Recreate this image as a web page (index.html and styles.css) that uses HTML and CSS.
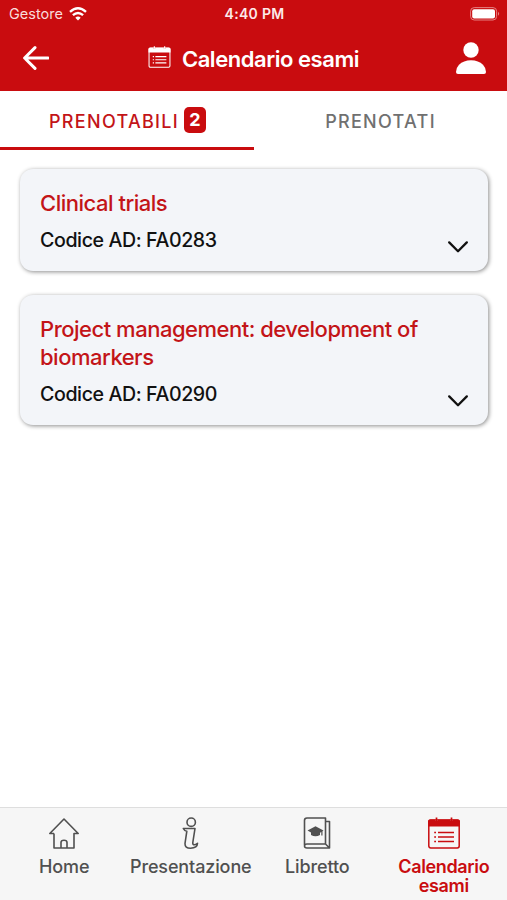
FILE: index.html
```html
<!DOCTYPE html>
<html lang="it">
<head>
<meta charset="utf-8">
<meta name="viewport" content="width=device-width, initial-scale=1">
<title>Calendario esami</title>
<link rel="stylesheet" href="styles.css">
</head>
<body>
<svg width="0" height="0" class="symbols" aria-hidden="true">
  <symbol id="calendar" viewBox="0 0 32 32">
    <path d="M8.500 .5V4M23.500 .5V4" fill="none" stroke="currentColor" stroke-width="1.700"/>
    <rect x=".8" y="3" width="30.400" height="28" rx="1.900" fill="none" stroke="currentColor" stroke-width="1.500"/>
    <path d="M0 9.500V4.500Q0 2.500 2 2.500H7.200V4H9.800V2.500H22.200V4H24.800V2.500H30Q32 2.500 32 4.500V9.500Z" fill="currentColor"/>
    <path d="M6.200 15.500H8M10 15.500H26M6.200 20H8M10 20H26M6.200 24.500H8M10 24.500H26" fill="none" stroke="currentColor" stroke-width="1.700"/>
  </symbol>
  <symbol id="chevron" viewBox="0 0 20 12">
    <path d="M1.200 1.400L10 10.200L18.800 1.400" fill="none" stroke="currentColor" stroke-width="2.300" stroke-linecap="round" stroke-linejoin="round"/>
  </symbol>
</svg>
<div class="screen">
  <header class="top">
    <div class="status">
      <div class="carrier"><span>Gestore</span>
        <svg class="wifi" viewBox="0 0 18 14"><path d="M9 13.500L6.300 10.700Q9 8.500 11.700 10.700Z" fill="#fff"/><path d="M1 4.800Q9-2.200 17 4.800M3.900 8.200Q9 3.700 14.100 8.200" fill="none" stroke="#fff" stroke-width="2.400"/></svg>
      </div>
      <time class="clock">4:40 PM</time>
      <svg class="battery" viewBox="0 0 30 14"><rect x=".6" y=".6" width="26" height="12.400" rx="3.600" fill="none" stroke="#e58082" stroke-width="1"/><rect x="2.200" y="2.200" width="22.800" height="9.200" rx="2" fill="#fff"/><path d="M28 4.800Q30.300 6.800 28 8.800Z" fill="#e58082"/></svg>
    </div>
    <div class="bar">
      <svg class="back" viewBox="0 0 26 24"><path d="M25 12H1.800M12 1.600L1.600 12L12 22.400" fill="none" stroke="#fff" stroke-width="3" stroke-linecap="round" stroke-linejoin="round"/></svg>
      <h1 class="title"><svg class="title-icon"><use href="#calendar"/></svg><span>Calendario esami</span></h1>
      <svg class="user" viewBox="0 0 30 32"><circle cx="15" cy="8" r="7.700" fill="#fff"/><path d="M0 30Q0 26 3 22.800Q7.500 18.300 15 18.300T27 22.800Q30 26 30 30Q30 32 28 32H2Q0 32 0 30Z" fill="#fff"/></svg>
    </div>
  </header>
  <nav class="tabs">
    <a class="tab active"><span>PRENOTABILI</span><b class="count">2</b></a>
    <a class="tab"><span>PRENOTATI</span></a>
  </nav>
  <main class="list">
    <article class="card">
      <h2>Clinical trials</h2>
      <div class="row"><p>Codice AD: FA0283</p><svg class="chevron"><use href="#chevron"/></svg></div>
    </article>
    <article class="card">
      <h2>Project management: development of biomarkers</h2>
      <div class="row"><p>Codice AD: FA0290</p><svg class="chevron"><use href="#chevron"/></svg></div>
    </article>
  </main>
  <nav class="bottom">
    <a class="item"><svg viewBox="0 0 32 32" class="icon"><path d="M6 16.500V31H26V16.500H30.200L16 2L1.800 16.500H6M13 31V25.500Q13 23.300 16 23.300T19 25.500V31" fill="none" stroke="currentColor" stroke-width="1.600" stroke-linejoin="round"/></svg><span>Home</span></a>
    <a class="item"><svg viewBox="0 0 32 32" class="icon"><g fill="none" stroke="currentColor" stroke-width="1.600" stroke-linejoin="round" stroke-linecap="round"><circle cx="16.200" cy="5.200" r="4.200"/><path d="M8.300 11.500H20L17.800 25.500Q17.600 27.800 19.300 27.800Q20.600 27.600 22.500 26.300Q22.300 31.200 15.500 31.200Q9.800 31.200 10 26.500L11.800 14.300Q9.500 14 8.300 11.500Z"/></g></svg><span>Presentazione</span></a>
    <a class="item"><svg viewBox="0 0 32 32" class="icon"><g fill="none" stroke="currentColor" stroke-width="1.600" stroke-linejoin="round"><path d="M3.500 28V3.500Q3.500 1 6 1H24.500V27H6Q3.500 27 3.500 29T6 31H28.500V4.500H25M28 30.500L24.500 27"/></g><path d="M6.500 13.500L14.500 9.200L22.500 13.500L21.500 14.300V18.500H20.300V15L19 15.700V18Q14.500 20.500 10 18V15.600Z" fill="currentColor"/></svg><span>Libretto</span></a>
    <a class="item current"><svg class="icon"><use href="#calendar"/></svg><span>Calendario<br>esami</span></a>
  </nav>
</div>
</body>
</html>
```
FILE: styles.css
```css
* { box-sizing: border-box; }
body { margin: 0; background: #fff; color: #111; font-family: Inter, "Liberation Sans", sans-serif; }
h1, h2, p { margin: 0; }
svg { display: block; flex: none; }
.symbols { display: none; }
.screen { display: flex; flex-direction: column; width: 507px; height: 900px; overflow: hidden; }
.top { height: 91px; background: #c90c0f; color: #fff; }
.status { display: grid; grid-template-columns: 1fr auto 1fr; align-items: center; height: 27px; padding: 0 7px 0 9px; font-size: 14.5px; }
.carrier { display: flex; align-items: center; gap: 6px; color: #f9dcdc; }
.wifi { width: 18px; height: 14px; }
.clock { font-weight: 600; font-size: 14px; letter-spacing: 0.3px; color: #fce9e9; }
.battery { width: 30px; height: 14px; justify-self: end; }
.bar { display: flex; align-items: center; justify-content: space-between; height: 62px; padding: 0 21px 0 23px; }
.back { width: 26px; height: 24px; }
.title { display: flex; align-items: center; gap: 11px; padding: 1px 0 0 2px; font-size: 22px; line-height: 28px; font-weight: 600; white-space: nowrap; letter-spacing: -0.45px; }
.title-icon { width: 23px; height: 22px; margin-top: -3px; }
.user { width: 30px; height: 32px; }
.tabs { display: flex; height: 59px; }
.tab { flex: 1; display: flex; align-items: center; justify-content: center; gap: 5px; padding-top: 5px; border-bottom: 3px solid transparent; color: #707070; font-size: 18px; font-weight: 500; letter-spacing: 1.3px; }
.tab.active { padding-left: 1px; color: #c31418; border-color: #c90c0f; }
.count { display: grid; place-items: center; width: 22px; height: 26px; margin-top: -4px; border-radius: 5px; background: #c90c0f; color: #fff; font-size: 18px; letter-spacing: 0; }
.list { flex: 1; display: flex; flex-direction: column; gap: 24px; padding: 19px 19px 0 20px; }
.card { padding: 20px 20px 17px; border-radius: 13px; background: #f3f5f9; box-shadow: 1px 1px 4px rgba(0, 0, 0, 0.45); }
.card h2 { color: #c31418; font-size: 22px; line-height: 28px; font-weight: 500; letter-spacing: -0.49px; }
.row { display: flex; justify-content: space-between; height: 37px; padding-top: 9px; }
.row p { font-size: 19.6px; line-height: 28px; font-weight: 500; letter-spacing: -0.4px; }
.chevron { width: 20px; height: 12px; margin-top: 14.5px; }
.bottom { display: grid; grid-template-columns: repeat(4, 1fr); height: 93px; padding: 9px 0 0 1px; border-top: 1px solid #dedede; background: #f6f6f6; color: #505050; }
.item { display: flex; flex-direction: column; align-items: center; gap: 8px; font-size: 18px; line-height: 19px; font-weight: 500; letter-spacing: -0.12px; text-align: center; white-space: nowrap; }
.icon { width: 32px; height: 32px; }
.current { color: #c90c0f; font-weight: 600; letter-spacing: -0.35px; }
```
